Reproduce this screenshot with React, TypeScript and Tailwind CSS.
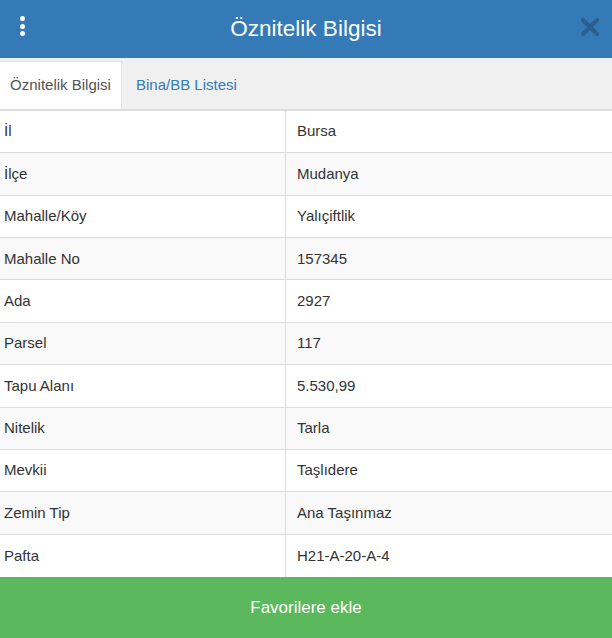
import { X } from 'lucide-react';

const rows: [string, string][] = [
  ['İl', 'Bursa'],
  ['İlçe', 'Mudanya'],
  ['Mahalle/Köy', 'Yalıçiftlik'],
  ['Mahalle No', '157345'],
  ['Ada', '2927'],
  ['Parsel', '117'],
  ['Tapu Alanı', '5.530,99'],
  ['Nitelik', 'Tarla'],
  ['Mevkii', 'Taşlıdere'],
  ['Zemin Tip', 'Ana Taşınmaz'],
  ['Pafta', 'H21-A-20-A-4'],
];

export default function App() {
  return (
    <div className="flex h-[638px] w-[612px] flex-col overflow-hidden bg-white font-['Liberation_Sans',Arial,sans-serif]">
      <div className="relative flex h-[58px] shrink-0 items-center justify-center bg-[#337ab7]">
        <div className="absolute left-[20px] top-[16px] flex flex-col gap-[2.5px]">
          <span className="h-[5px] w-[5px] rounded-full bg-white" />
          <span className="h-[5px] w-[5px] rounded-full bg-white" />
          <span className="h-[5px] w-[5px] rounded-full bg-white" />
        </div>
        <h1 className="text-[22.5px] leading-none text-white">Öznitelik Bilgisi</h1>
        <X className="absolute right-[8px] top-[13px] h-[28px] w-[28px] text-[#2a5f8e]" strokeWidth={3.6} />
      </div>

      <div className="flex h-[53px] shrink-0 items-end border-b-2 border-[#dddddd] bg-[#f0f0f0]">
        <div className="flex h-[48px] w-[122px] items-center justify-center border-r border-t border-[#e4e4e4] bg-white text-[15px] text-[#555555]">
          Öznitelik Bilgisi
        </div>
        <div className="flex h-[48px] items-center px-[14px] text-[15px] text-[#337ab7]">Bina/BB Listesi</div>
      </div>

      <div className="flex flex-1 flex-col">
        {rows.map(([k, v], i) => (
          <div
            key={k}
            className={`flex h-[42.36px] border-b border-[#dddddd] text-[15px] text-[#333333] ${i % 2 === 1 ? 'bg-[#f9f9f9]' : 'bg-white'} ${i === rows.length - 1 ? 'border-b-0' : ''}`}
          >
            <div className="flex w-[286px] items-center border-r border-[#dddddd] pl-[4px]">{k}</div>
            <div className="flex flex-1 items-center pl-[11px]">{v}</div>
          </div>
        ))}
      </div>

      <button className="flex h-[61px] shrink-0 items-center justify-center bg-[#5cb85c] text-[17px] text-white">
        Favorilere ekle
      </button>
    </div>
  );
}
